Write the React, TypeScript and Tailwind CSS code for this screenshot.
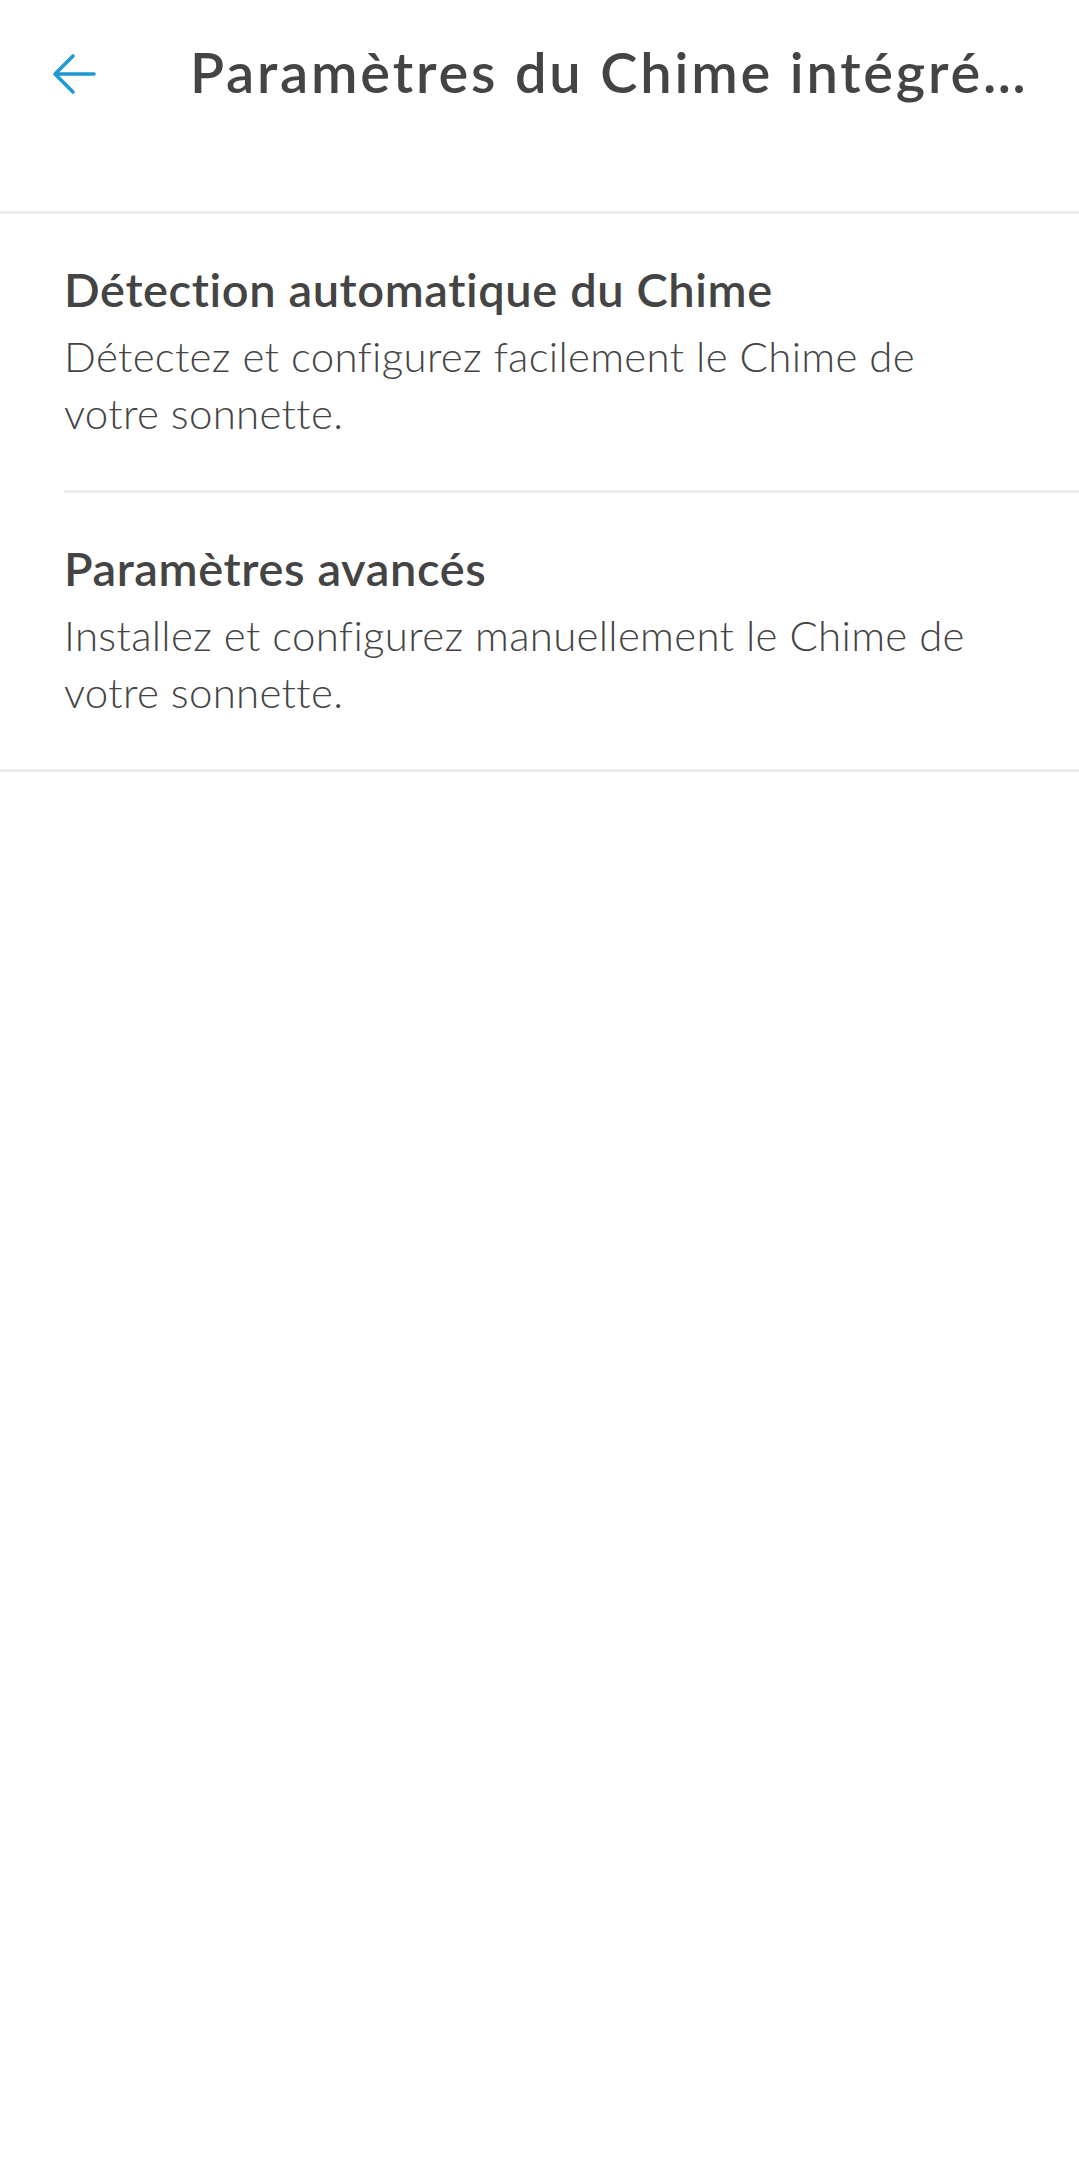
import React from 'react';

const options = [
  {
    title: 'Détection automatique du Chime',
    description: 'Détectez et configurez facilement le Chime de\nvotre sonnette.',
  },
  {
    title: 'Paramètres avancés',
    description: 'Installez et configurez manuellement le Chime de\nvotre sonnette.',
  },
];

const BackArrow = () => (
  <svg width="44" height="42" viewBox="0 0 44 42" fill="none">
    <path
      d="M21 3 L3 21 L21 39 M3.5 21 H42"
      stroke="#1f98d4"
      strokeWidth="3.6"
      strokeLinecap="round"
      strokeLinejoin="round"
    />
  </svg>
);

export default function App() {
  return (
    <div className="min-h-screen w-full bg-white text-[#444444] [font-family:Lato,'Noto_Sans',sans-serif]">
      <header className="flex h-[211px] items-start">
        <button className="ml-[52px] mt-[52px] flex h-[44px] w-[44px] shrink-0 items-center justify-center">
          <BackArrow />
        </button>
        <h1 className="ml-[94px] mr-[30px] mt-[37px] truncate text-[56px] font-semibold leading-[70px] tracking-[2.8px]">
          Paramètres du Chime intégré…
        </h1>
      </header>
      <div className="h-[3px] w-full bg-[#ececec]" />

      {options.map((opt, i) => (
        <div key={opt.title}>
          <button className="block w-full pl-[64px] pr-[40px] pb-[48px] pt-[45px] text-left">
            <div className="text-[47px] font-semibold leading-[60px] tracking-[0.6px]">{opt.title}</div>
            <div className="mt-[9px] whitespace-pre-line text-[42px] font-light leading-[57px] tracking-[0.3px]">
              {opt.description}
            </div>
          </button>
          <div className={i < options.length - 1 ? 'ml-[64px] h-[3px] bg-[#ececec]' : 'h-[3px] w-full bg-[#ececec]'} />
        </div>
      ))}
    </div>
  );
}
